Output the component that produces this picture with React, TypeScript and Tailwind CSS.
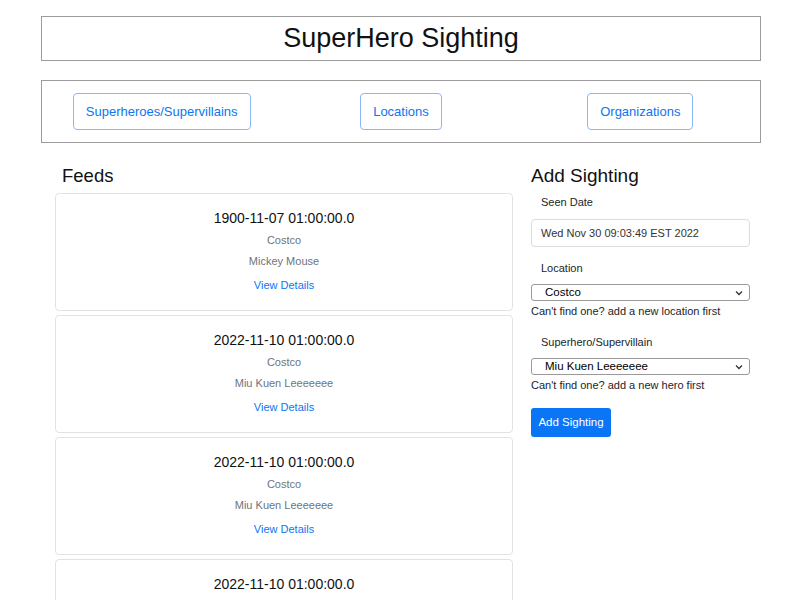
const sightings = [
  { date: '1900-11-07 01:00:00.0', location: 'Costco', hero: 'Mickey Mouse' },
  { date: '2022-11-10 01:00:00.0', location: 'Costco', hero: 'Miu Kuen Leeeeeee' },
  { date: '2022-11-10 01:00:00.0', location: 'Costco', hero: 'Miu Kuen Leeeeeee' },
  { date: '2022-11-10 01:00:00.0', location: 'Costco', hero: 'Miu Kuen Leeeeeee' },
];

function Chevron() {
  return (
    <svg width="8" height="6" viewBox="0 0 8 6" className="text-[#333]">
      <path d="M1 1.5 L4 4.5 L7 1.5" fill="none" stroke="currentColor" strokeWidth="1.3" />
    </svg>
  );
}

function FakeSelect({ value }: { value: string }) {
  return (
    <div className="flex h-[17px] w-[219px] items-center justify-between rounded-[3px] border border-[#9a9a9a] bg-white pr-[6px] pl-[13px] text-[11.5px] leading-none text-black">
      <span>{value}</span>
      <Chevron />
    </div>
  );
}

export default function App() {
  return (
    <div className="h-[600px] w-[800px] overflow-hidden bg-white font-['Liberation_Sans',Arial,sans-serif] text-[#212529]">
      <div className="ml-[41px] w-[720px] pt-[16px]">
        <header className="flex h-[45px] items-center justify-center border border-[#9c9c9c]">
          <h1 className="text-[27px] leading-none text-[#111]">SuperHero Sighting</h1>
        </header>

        <nav className="mt-[19px] grid h-[63px] grid-cols-3 items-center border border-[#9c9c9c]">
          {['Superheroes/Supervillains', 'Locations', 'Organizations'].map((label) => (
            <div key={label} className="flex justify-center">
              <button className="h-[37px] rounded-[4px] border border-[#8ab8f7] px-[12px] text-[13px] text-[#0a75f5]">
                {label}
              </button>
            </div>
          ))}
        </nav>
      </div>

      <div className="mt-[17px] flex gap-[18px] pl-[55px]">
        <section className="w-[458px]">
          <h2 className="pl-[7px] pt-[2px] text-[18.5px] leading-[28px] text-[#111]">Feeds</h2>
          <div className="mt-[3px] flex flex-col gap-[4px]">
            {sightings.map((s, i) => (
              <div
                key={i}
                className="flex h-[118px] flex-col items-center rounded-[4px] border border-[#e3e3e3] pt-[12px]"
              >
                <p className="text-[14px] leading-[24px] text-[#111]">{s.date}</p>
                <p className="text-[11px] leading-[20px] text-[#6c757d]">{s.location}</p>
                <p className="mt-[1px] text-[11px] leading-[20px] text-[#6c757d]">{s.hero}</p>
                <a className="mt-[4px] text-[11px] leading-[20px] text-[#0a75f5]">View Details</a>
              </div>
            ))}
          </div>
        </section>

        <section className="w-[219px]">
          <h2 className="pt-[2px] text-[19px] leading-[28px] text-[#111]">Add Sighting</h2>
          <label className="mt-[4px] block pl-[10px] text-[11px] leading-[16px]">Seen Date</label>
          <div className="mt-[9px] flex h-[28px] items-center rounded-[4px] border border-[#dcdcdc] pl-[9px] text-[11px] text-[#333]">
            Wed Nov 30 09:03:49 EST 2022
          </div>

          <label className="mt-[13px] block pl-[10px] text-[11px] leading-[16px]">Location</label>
          <div className="mt-[8px]">
            <FakeSelect value="Costco" />
          </div>
          <p className="mt-[2px] text-[11px] leading-[16px]">Can't find one? add a new location first</p>

          <label className="mt-[15px] block pl-[10px] text-[11px] leading-[16px]">Superhero/Supervillain</label>
          <div className="mt-[8px]">
            <FakeSelect value="Miu Kuen Leeeeeee" />
          </div>
          <p className="mt-[2px] text-[11px] leading-[16px]">Can't find one? add a new hero first</p>

          <button className="mt-[15px] h-[29px] w-[80px] rounded-[3px] bg-[#0a75f5] text-[11.5px] text-white">
            Add Sighting
          </button>
        </section>
      </div>
    </div>
  );
}
